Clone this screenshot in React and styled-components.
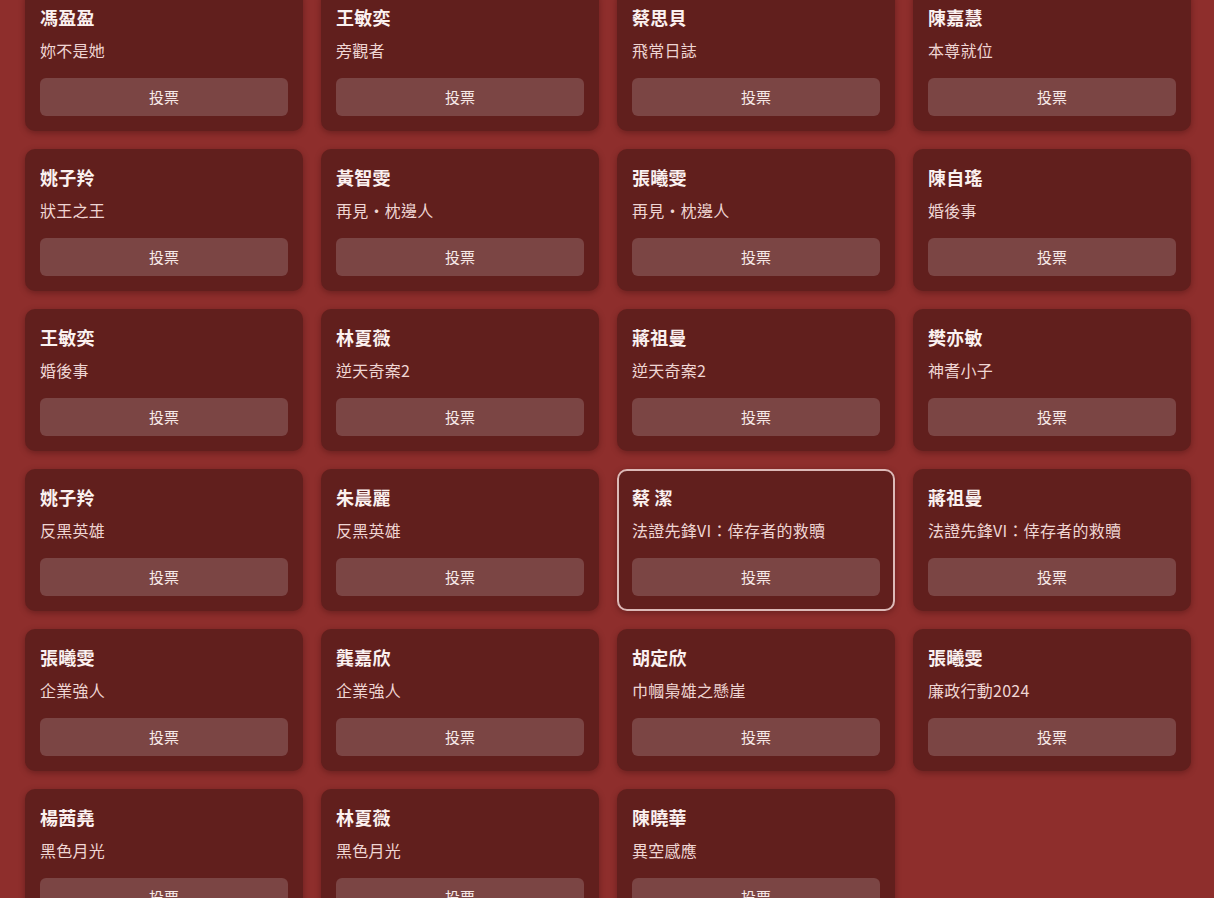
import React from "react";
import styled, { createGlobalStyle } from "styled-components";

const GlobalStyle = createGlobalStyle`
  html, body {
    margin: 0;
    padding: 0;
    overflow: hidden;
    background: #8e2e2c;
  }
  body {
    font-family: "Noto Sans CJK TC", "Noto Sans", sans-serif;
    -webkit-font-smoothing: antialiased;
  }
`;

const Page = styled.main`
  min-height: 100vh;
  background: #8e2e2c;
  padding: 0 23px 40px 25px;
  box-sizing: border-box;
`;

const Grid = styled.section`
  display: grid;
  grid-template-columns: repeat(4, 278px);
  column-gap: 18px;
  row-gap: 18px;
  margin-top: -11px;
`;

const Card = styled.article`
  box-sizing: border-box;
  height: 142px;
  padding: 12px 13px 13px;
  border-radius: 10px;
  background: #611f1d;
  border: 2px solid ${(p) => (p.$selected ? "#dcb9b7" : "transparent")};
  box-shadow: 0 2px 6px rgba(40, 6, 6, 0.35);
  display: flex;
  flex-direction: column;
`;

const Name = styled.h3`
  margin: 0;
  font-size: 18px;
  font-weight: 600;
  line-height: 28px;
  letter-spacing: 0.2px;
  color: #fbf1f0;
`;

const Title = styled.p`
  margin: 7px 0 0;
  font-size: 16px;
  line-height: 24px;
  letter-spacing: 0.25px;
  color: #efd5d3;
`;

const VoteButton = styled.button`
  margin-top: 16px;
  flex-shrink: 0;
  height: 38px;
  width: 100%;
  border: none;
  border-radius: 6px;
  background: #7b4544;
  color: #f7e9e8;
  font-family: "Noto Sans CJK TC", "Noto Sans", sans-serif;
  font-size: 15px;
  line-height: 38px;
  padding: 0;
  cursor: pointer;
`;

const nominees = [
  ["馮盈盈", "妳不是她"],
  ["王敏奕", "旁觀者"],
  ["蔡思貝", "飛常日誌"],
  ["陳嘉慧", "本尊就位"],
  ["姚子羚", "狀王之王"],
  ["黃智雯", "再見・枕邊人"],
  ["張曦雯", "再見・枕邊人"],
  ["陳自瑤", "婚後事"],
  ["王敏奕", "婚後事"],
  ["林夏薇", "逆天奇案2"],
  ["蔣祖曼", "逆天奇案2"],
  ["樊亦敏", "神耆小子"],
  ["姚子羚", "反黑英雄"],
  ["朱晨麗", "反黑英雄"],
  ["蔡 潔", "法證先鋒VI：倖存者的救贖", true],
  ["蔣祖曼", "法證先鋒VI：倖存者的救贖"],
  ["張曦雯", "企業強人"],
  ["龔嘉欣", "企業強人"],
  ["胡定欣", "巾幗梟雄之懸崖"],
  ["張曦雯", "廉政行動2024"],
  ["楊茜堯", "黑色月光"],
  ["林夏薇", "黑色月光"],
  ["陳曉華", "異空感應"],
];

export default function App() {
  return (
    <>
      <GlobalStyle />
      <Page>
        <Grid>
          {nominees.map(([name, show, selected], i) => (
            <Card key={i} $selected={!!selected}>
              <Name>{name}</Name>
              <Title>{show}</Title>
              <VoteButton type="button">投票</VoteButton>
            </Card>
          ))}
        </Grid>
      </Page>
    </>
  );
}
